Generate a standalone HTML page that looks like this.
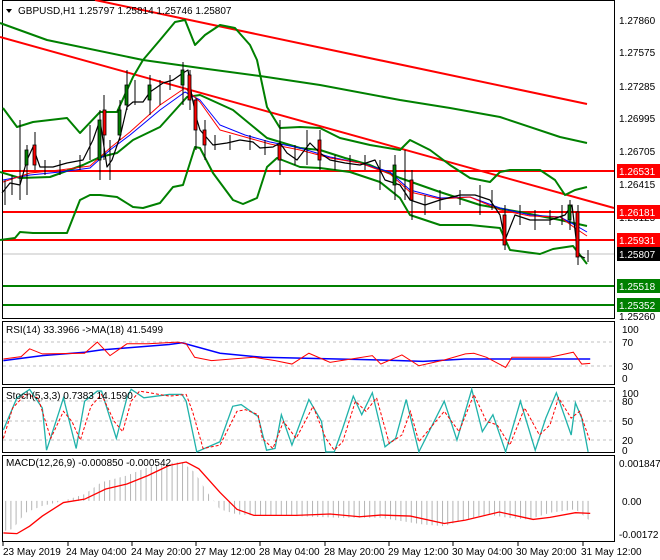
<!DOCTYPE html>
<html><head><meta charset="utf-8"><style>
body{margin:0;background:#fff;}
svg{display:block;font-family:"Liberation Sans",sans-serif;font-size:10px;}
</style></head><body>
<svg width="660" height="560" viewBox="0 0 660 560" xmlns="http://www.w3.org/2000/svg">
<defs>
<pattern id="hist" x="0" y="0" width="5.2" height="10" patternUnits="userSpaceOnUse"><rect x="0" y="0" width="1" height="10" fill="#b4b4b4"/></pattern>
</defs>
<rect width="660" height="560" fill="#fff"/>
<rect x="2.5" y="0.5" width="612" height="318" fill="none" stroke="#000"/>
<g fill="none" stroke-linejoin="round">
 <polyline stroke="#008000" stroke-width="2" points="0,23 47,40 143,60 200,68 260,76 320,85 400,100 450,108 500,117 560,137 587,143"/>
 <line x1="95" y1="0" x2="587" y2="104" stroke="#f00" stroke-width="2"/>
 <line x1="0" y1="37" x2="614" y2="208" stroke="#f00" stroke-width="2"/>
 <line x1="3" y1="171" x2="614" y2="171" stroke="#f00" stroke-width="2"/>
 <line x1="3" y1="212" x2="614" y2="212" stroke="#f00" stroke-width="2"/>
 <line x1="3" y1="240" x2="614" y2="240" stroke="#f00" stroke-width="2"/>
 <line x1="3" y1="286" x2="614" y2="286" stroke="#008000" stroke-width="2"/>
 <line x1="3" y1="305" x2="614" y2="305" stroke="#008000" stroke-width="2"/>
 <line x1="3" y1="254" x2="614" y2="254" stroke="#c0c0c0" stroke-width="1"/>
 <polyline stroke="#008000" stroke-width="2" points="3,108 17,127 33,122 67,118 80,133 100,112 117,112 133,77 143,60 160,40 175,22 185,20 195,45 205,35 220,25 235,28 250,45 257,60 267,107 280,128 300,127 320,128 340,138 370,145 400,150 410,140 430,150 450,165 470,178 490,182 500,172 510,170 540,170 555,180 565,195 575,190 587,187"/>
 <polyline stroke="#008000" stroke-width="2" points="0,172 20,178 50,177 83,165 100,157 117,153 133,140 160,127 187,97 200,95 233,110 267,138 300,148 320,150 345,158 370,165 400,178 440,192 480,205 520,212 560,220 587,226"/>
 <polyline stroke="#008000" stroke-width="2" points="0,240 15,238 20,232 33,233 67,233 80,200 90,195 100,195 117,197 133,207 143,208 160,203 173,187 183,185 195,147 200,148 213,173 233,200 243,204 257,198 267,167 277,158 300,167 320,168 350,172 380,182 400,198 410,215 440,225 470,225 500,228 510,250 540,254 553,249 573,246 587,264"/>
 <polyline stroke="#00f" stroke-width="1" points="3,180 30,175 60,172 90,168 110,150 130,135 160,110 185,92 200,100 220,125 245,135 270,142 300,148 330,157 360,163 390,172 410,190 440,198 470,197 500,208 530,215 560,217 575,225 587,232"/>
 <polyline stroke="#f00" stroke-width="1" points="3,182 30,173 60,170 90,166 110,148 130,132 160,105 185,88 200,102 220,130 245,137 270,144 300,150 330,158 360,163 390,174 410,192 440,199 470,197 500,210 530,216 560,217 575,228 587,236"/>
 <polyline stroke="#000" stroke-width="1.2" points="2,193 10,183 20,185 27,160 33,147 40,167 53,167 67,163 83,160 93,140 100,120 107,167 112,160 120,137 127,107 133,102 143,102 150,92 163,83 173,80 183,73 188,70 192,97 197,120 200,130 207,138 213,145 227,143 240,140 253,142 260,148 273,147 280,143 287,153 297,160 310,143 320,153 330,160 345,163 360,165 375,160 385,180 400,185 410,200 425,205 440,200 460,195 475,195 490,200 500,215 505,240 515,215 530,220 550,220 565,215 572,205 578,255 585,258"/>
</g>
<g stroke="#000" stroke-width="1">
 <path d="M5 180V205 M12 175V195 M20 120V200 M27 145V195 M35 132V170 M45 160V175 M60 160V175 M80 155V170 M90 125V160 M100 110V180 M104 95V160 M110 140V180 M120 100V140 M127 70V110 M135 80V105 M150 75V115 M160 80V105 M170 75V90 M183 62V105 M190 70V110 M196 98V150 M205 120V160 M215 135V150 M230 135V150 M250 135V150 M265 140V155 M280 120V175 M295 145V165 M307 130V165 M320 130V170 M335 155V170 M350 155V170 M365 155V170 M380 160V190 M395 155V200 M405 150V200 M412 170V220 M425 195V215 M440 190V210 M460 190V205 M480 185V215 M492 190V210 M505 205V250 M520 205V225 M535 210V230 M550 210V225 M562 205V225 M570 200V230 M578 205V265 M588 250V262"/>
</g>
<g stroke="#000" stroke-width="0.8">
 <rect x="25" y="150" width="3" height="15" fill="#008000"/><rect x="33" y="145" width="3" height="20" fill="#f00"/>
 <rect x="98" y="120" width="3" height="40" fill="#008000"/><rect x="103" y="110" width="3" height="25" fill="#f00"/>
 <rect x="118" y="110" width="3" height="25" fill="#008000"/><rect x="125" y="85" width="3" height="20" fill="#008000"/>
 <rect x="148" y="85" width="3" height="15" fill="#008000"/><rect x="181" y="70" width="3" height="15" fill="#008000"/>
 <rect x="188" y="75" width="3" height="25" fill="#f00"/><rect x="194" y="100" width="3" height="30" fill="#f00"/>
 <rect x="203" y="130" width="3" height="15" fill="#f00"/><rect x="278" y="145" width="3" height="15" fill="#f00"/>
 <rect x="318" y="140" width="3" height="20" fill="#f00"/><rect x="393" y="165" width="3" height="20" fill="#008000"/>
 <rect x="410" y="180" width="3" height="20" fill="#f00"/><rect x="503" y="215" width="3" height="30" fill="#f00"/>
 <rect x="568" y="205" width="3" height="15" fill="#008000"/><rect x="576" y="212" width="3" height="45" fill="#f00"/>
</g>
<path d="M6 9 L12 9 L9 13 Z" fill="#000"/>
<text x="18" y="14" fill="#000">GBPUSD,H1  1.25797 1.25814 1.25746 1.25807</text>
<g fill="#000">
 <text x="619" y="24">1.27860</text><text x="619" y="56">1.27575</text><text x="619" y="90">1.27285</text>
 <text x="619" y="122">1.26995</text><text x="619" y="155">1.26705</text><text x="619" y="188">1.26415</text>
 <text x="619" y="221">1.26125</text><text x="619" y="320">1.25260</text>
</g>
<rect x="617" y="164" width="43" height="14" fill="#f00"/><text x="619" y="175" fill="#fff">1.26531</text>
<rect x="617" y="205" width="43" height="14" fill="#f00"/><text x="619" y="216" fill="#fff">1.26181</text>
<rect x="617" y="233" width="43" height="14" fill="#f00"/><text x="619" y="244" fill="#fff">1.25931</text>
<rect x="617" y="247" width="43" height="14" fill="#000"/><text x="619" y="258" fill="#fff">1.25807</text>
<rect x="617" y="279" width="43" height="14" fill="#008000"/><text x="619" y="290" fill="#fff">1.25518</text>
<rect x="617" y="298" width="43" height="14" fill="#008000"/><text x="619" y="309" fill="#fff">1.25352</text>

<rect x="2.5" y="321.5" width="612" height="63" fill="none" stroke="#000"/>
<g stroke="#c0c0c0" stroke-dasharray="3,3"><line x1="3" y1="342" x2="614" y2="342"/><line x1="3" y1="366" x2="614" y2="366"/></g>
<g transform="translate(0,310) scale(0.4231,0.3378)" fill="none">
 <polyline vector-effect="non-scaling-stroke" stroke="#00f" stroke-width="1.5" points="8,150 100,135 200,125 240,118 300,112 400,102 430,97 520,128 620,140 900,148 1000,152 1100,145 1200,145 1395,145"/>
 <polyline vector-effect="non-scaling-stroke" stroke="#f00" stroke-width="1" points="8,145 50,138 70,115 100,130 200,128 230,95 260,135 300,100 350,100 420,95 440,100 460,140 500,150 600,140 650,150 690,160 730,128 780,155 880,135 900,160 950,133 990,165 1050,148 1100,130 1120,128 1150,140 1195,170 1210,140 1300,140 1355,125 1375,160 1395,158"/>
</g>
<text x="6" y="333" fill="#000">RSI(14) 33.3966  -&gt;MA(18) 41.5499</text>
<g fill="#000"><text x="622" y="333">100</text><text x="622" y="346">70</text><text x="622" y="370">30</text><text x="622" y="382">0</text></g>

<rect x="2.5" y="387.5" width="612" height="65" fill="none" stroke="#000"/>
<g stroke="#c0c0c0" stroke-dasharray="3,3"><line x1="3" y1="401" x2="614" y2="401"/><line x1="3" y1="421" x2="614" y2="421"/><line x1="3" y1="440" x2="614" y2="440"/></g>
<g transform="translate(0,310) scale(0.4231,0.3378)" fill="none">
 <polyline vector-effect="non-scaling-stroke" stroke="#20b2aa" stroke-width="1.3" points="8,355 40,260 70,235 100,290 110,415 140,300 150,260 180,410 200,270 230,240 240,240 275,380 300,260 310,235 340,260 400,250 430,250 440,270 465,420 520,390 550,285 570,280 610,315 630,415 650,410 665,310 690,400 730,265 760,330 770,420 790,420 810,350 835,255 855,310 880,245 910,405 935,380 960,265 990,420 1050,270 1080,385 1115,235 1140,360 1165,310 1195,420 1230,270 1265,415 1290,320 1315,245 1350,370 1360,275 1375,320 1390,420"/>
 <polyline vector-effect="non-scaling-stroke" stroke="#f00" stroke-width="1" stroke-dasharray="3,2" points="8,380 30,290 60,250 90,260 120,380 150,300 170,330 190,385 215,285 240,250 270,330 290,360 310,270 330,240 400,255 440,250 455,300 480,410 520,400 560,300 580,295 610,310 620,380 645,410 670,330 700,380 740,285 770,380 790,415 810,390 840,270 865,300 890,260 920,395 950,370 970,300 990,390 1050,300 1085,360 1120,250 1150,330 1175,340 1205,400 1240,290 1275,370 1300,340 1320,260 1350,320 1370,300 1395,390"/>
</g>
<text x="6" y="399" fill="#000">Stoch(5,3,3) 0.7383 14.1590</text>
<g fill="#000"><text x="622" y="397">100</text><text x="622" y="405">80</text><text x="622" y="425">50</text><text x="622" y="444">20</text><text x="622" y="454">0</text></g>

<rect x="2.5" y="455.5" width="612" height="86" fill="none" stroke="#000"/>
<g transform="translate(0,310)">
 <polygon fill="url(#hist)" stroke="none" points="4,190.9 4,221 12.7,219 25.4,202.7 42.3,195.9 63.5,190.9 84.6,184.1 101.5,172.3 126.9,165.5 143.8,158.8 160.8,153.7 181.9,152 194.6,162.2 207.3,182.4 220,199.3 236.9,204.4 253.8,205.4 296.2,206.1 338.5,207.8 380.8,207.8 423.1,214.5 444.2,216.2 465.4,209.5 486.5,204.4 507.7,207.8 528.8,209.5 550,202.7 575.4,199.3 590.2,211.1 590.2,190.9"/>
</g>
<g transform="translate(0,310) scale(0.4231,0.3378)">
 <polyline vector-effect="non-scaling-stroke" fill="none" stroke="#f00" stroke-width="1.3" points="8,660 40,662 70,640 100,610 150,570 200,560 250,530 300,515 350,490 400,460 440,450 470,470 520,540 560,590 600,608 700,608 780,604 850,612 900,607 970,610 1050,632 1100,622 1180,598 1260,620 1300,614 1360,600 1395,602"/>
</g>
<text x="6" y="466" fill="#000">MACD(12,26,9) -0.000850 -0.000542</text>
<g fill="#000"><text x="619" y="467">0.001847</text><text x="622" y="505">0.00</text><text x="619" y="538">-0.00172</text></g>

<g stroke="#000"><path d="M3 542V546 M68 542V546 M132 542V546 M196 542V546 M260 542V546 M325 542V546 M389 542V546 M453 542V546 M518 542V546 M583 542V546"/></g>
<g fill="#000">
 <text x="3" y="555">23 May 2019</text><text x="66" y="555">24 May 04:00</text><text x="131" y="555">24 May 20:00</text>
 <text x="195" y="555">27 May 12:00</text><text x="259" y="555">28 May 04:00</text><text x="324" y="555">28 May 20:00</text>
 <text x="388" y="555">29 May 12:00</text><text x="452" y="555">30 May 04:00</text><text x="516" y="555">30 May 20:00</text>
 <text x="581" y="555">31 May 12:00</text>
</g>
</svg>
</body></html>
